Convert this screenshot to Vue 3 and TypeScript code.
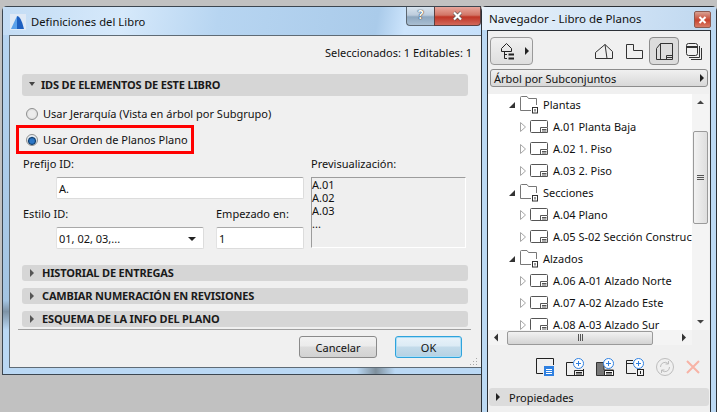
<script setup lang="ts">
interface Row { kind: 'folder' | 'sheet'; text: string }
const rows: Row[] = [
  { kind: 'folder', text: 'Plantas' },
  { kind: 'sheet', text: 'A.01 Planta Baja' },
  { kind: 'sheet', text: 'A.02 1. Piso' },
  { kind: 'sheet', text: 'A.03 2. Piso' },
  { kind: 'folder', text: 'Secciones' },
  { kind: 'sheet', text: 'A.04 Plano' },
  { kind: 'sheet', text: 'A.05 S-02 Sección Constructiva' },
  { kind: 'folder', text: 'Alzados' },
  { kind: 'sheet', text: 'A.06 A-01 Alzado Norte' },
  { kind: 'sheet', text: 'A.07 A-02 Alzado Este' },
  { kind: 'sheet', text: 'A.08 A-03 Alzado Sur' },
]
const collapsed = ['HISTORIAL DE ENTREGAS', 'CAMBIAR NUMERACIÓN EN REVISIONES', 'ESQUEMA DE LA INFO DEL PLANO']
</script>

<template>
  <div class="desktop">
    <section class="win dialog">
      <div class="dlg-title">
        <svg class="logo" width="16" height="16" viewBox="0 0 16 16">
          <rect width="16" height="16" fill="#dfe9f5" />
          <path d="M1 15 L7 2 L7 15Z" fill="#5aa0ea" />
          <path d="M7 15 L7 2 Q11 2 14 15Z" fill="#1d5fc0" />
        </svg>
        <span class="dlg-name">Definiciones del Libro</span>
        <div class="caption">
          <span class="cap-help">?</span>
          <span class="cap-close">
            <svg width="11" height="10" viewBox="0 0 11 10"><path d="M2 1.5 L9 8.5 M9 1.5 L2 8.5" stroke="#555" stroke-width="3.4" /><path d="M2 1.5 L9 8.5 M9 1.5 L2 8.5" stroke="#fff" stroke-width="2.2" /></svg>
          </span>
        </div>
      </div>
      <div class="dlg-client">
        <div class="selected">Seleccionados: 1 Editables: 1</div>
        <div class="sec-head"><i class="tri-down"></i>IDS DE ELEMENTOS DE ESTE LIBRO</div>
        <div class="radios">
          <label class="radio-row"><i class="radio"></i>Usar Jerarquía (Vista en árbol por Subgrupo)</label>
          <label class="radio-row marked"><i class="radio on"></i>Usar Orden de Planos Plano</label>
        </div>
        <div class="form">
          <div class="form-left">
            <div class="lbl">Prefijo ID:</div>
            <div class="field prefix">A.</div>
            <div class="two">
              <div>
                <div class="lbl">Estilo ID:</div>
                <div class="field style-sel">01, 02, 03,...<i class="sel-arrow"></i></div>
              </div>
              <div>
                <div class="lbl">Empezado en:</div>
                <div class="field start">1</div>
              </div>
            </div>
          </div>
          <div class="form-right">
            <div class="lbl">Previsualización:</div>
            <div class="preview">A.01<br />A.02<br />A.03<br />...</div>
          </div>
        </div>
        <div class="sec-list">
          <div v-for="c in collapsed" :key="c" class="sec-head small"><i class="tri-right"></i>{{ c }}</div>
        </div>
        <div class="dlg-foot">
          <button class="btn cancel">Cancelar</button>
          <button class="btn ok">OK</button>
        </div>
        <svg class="grip" width="9" height="9" viewBox="0 0 9 9"><g fill="#a8a8a8"><rect x="7" y="1" width="1" height="1" /><rect x="7" y="4" width="1" height="1" /><rect x="7" y="7" width="1" height="1" /><rect x="4" y="4" width="1" height="1" /><rect x="4" y="7" width="1" height="1" /><rect x="1" y="7" width="1" height="1" /></g></svg>
      </div>
      <div class="dlg-bottom"></div>
    </section>

    <section class="win nav">
      <div class="nav-title">
        <span>Navegador - Libro de Planos</span>
        <span class="nav-close"><svg width="9" height="8" viewBox="0 0 9 8"><path d="M1.5 1 L7.5 7 M7.5 1 L1.5 7" stroke="#fff" stroke-width="2" /></svg></span>
      </div>
      <div class="nav-client">
        <div class="nav-tools">
          <button class="tool-map">
            <svg width="14" height="17" viewBox="0 0 14 17" fill="none" stroke="#222"><path d="M.5 5.5 L5.5 .5 L10.5 5.5 V8.5 H.5 Z" /><path d="M3.5 8.5 V15.5 H6 M3.5 11.5 H6" /><path d="M7.5 11.5 H13 M7.5 15.5 H13" stroke-width="2" /></svg>
            <i class="tri-right black"></i>
          </button>
          <div class="tool-icons">
            <span class="ti">
              <svg width="18" height="15" viewBox="0 0 18 15" fill="none" stroke="#333"><path d="M.5 14.5 V8.5 L10 .5 L17.5 7.5 V14.5 Z M10 .5 L12 14.5" /></svg>
            </span>
            <span class="ti">
              <svg width="17" height="15" viewBox="0 0 17 15" fill="none" stroke="#333"><path d="M.5 .5 H7.5 V6.5 H16.5 V14.5 H.5 Z" /></svg>
            </span>
            <span class="ti sel">
              <svg width="17" height="17" viewBox="0 0 17 17" fill="none" stroke="#333"><path d="M4.5 .5 H16.5 V16.5 H.5 V5.5 Z M4.5 .5 V16.5" /><path d="M10.5 12.5 H16 M10.5 14.5 H16 M10.5 12.5 V16" /></svg>
            </span>
            <span class="ti">
              <svg width="16" height="17" viewBox="0 0 16 17" fill="none" stroke="#333"><rect x=".5" y=".5" width="11" height="12" rx="2" /><path d="M13.5 3 V14.5 H3 M15.5 5 V16.5 H5" /><path d="M.5 4 H11.5" stroke-width="2" /></svg>
            </span>
          </div>
        </div>
        <div class="nav-select">Árbol por Subconjuntos<i class="tri-right black"></i></div>
        <div class="tree-wrap">
          <div class="tree-top">
            <div class="tree">
              <div v-for="r in rows" :key="r.text" class="tree-row" :class="r.kind">
                <template v-if="r.kind === 'folder'">
                  <svg class="exp" width="7" height="6" viewBox="0 0 7 6"><path d="M0 6 H6 V0 Z" fill="#333" /></svg>
                  <svg class="ic" width="19" height="18" viewBox="0 0 19 18" fill="none" stroke="#777"><path d="M.5 14.5 V1.5 Q.5 .5 1.5 .5 H7 L8.5 2.5 H16.5 V9 M.5 14.5 H11" /><rect x="12.5" y="11.5" width="5" height="5.5" stroke="#333" /><path d="M15 13 V15.5" stroke="#333" /></svg>
                </template>
                <template v-else>
                  <svg class="exp" width="6" height="10" viewBox="0 0 6 10"><path d="M.5 .5 L5.5 5 L.5 9.5 Z" fill="#fff" stroke="#a6a6a6" /></svg>
                  <svg class="ic" width="18" height="13" viewBox="0 0 18 13" fill="none" stroke="#555"><path d="M17.5 7 V1.5 Q17.5 .5 16.5 .5 H1.5 Q.5 .5 .5 1.5 V11.5 Q.5 12.5 1.5 12.5 H17.5 V7.5 H10.5 V12.5" /><path d="M12 9.5 H16.5 M12 11 H16.5" /></svg>
                </template>
                <span class="tree-text">{{ r.text }}</span>
              </div>
            </div>
            <div class="vscroll">
              <svg width="17" height="16" viewBox="0 0 17 16"><path d="M5 10 L8.5 6.5 L12 10 Z" fill="#444" /></svg>
              <div class="vtrack"><div class="vthumb"><b></b><b></b><b></b></div></div>
              <svg width="17" height="16" viewBox="0 0 17 16"><path d="M5 6 L8.5 9.5 L12 6 Z" fill="#444" /></svg>
            </div>
          </div>
          <div class="hscroll">
            <svg width="17" height="15" viewBox="0 0 17 15"><path d="M10 3.5 L6 7.5 L10 11.5 Z" fill="#333" /></svg>
            <div class="hthumb"><b></b><b></b><b></b></div>
            <div class="htrack"></div>
            <svg width="17" height="15" viewBox="0 0 17 15"><path d="M7 3.5 L11 7.5 L7 11.5 Z" fill="#333" /></svg>
          </div>
        </div>
        <div class="nav-actions">
          <svg width="18" height="18" viewBox="0 0 18 18" fill="none"><path d="M17.5 7 V.5 H.5 V15.5 H7" stroke="#222" /><rect x="8" y="8" width="10" height="10" fill="#2f80e0" /><path d="M10 11.5 H16 M10 13.5 H16 M10 15.5 H16" stroke="#fff" /></svg>
          <svg width="18" height="18" viewBox="0 0 18 18" fill="none"><path d="M7 4.5 H.5 V17.5 H17.5 V11 M8.5 12.5 H17.5 V17.5 H8.5 Z M10 14.5 H16 M10 16 H16" stroke="#222" /><circle cx="12.5" cy="5.5" r="5" fill="#fff" stroke="#2f80e0" /><path d="M10 5.5 H15 M12.5 3 V8" stroke="#2f80e0" /></svg>
          <svg width="18" height="18" viewBox="0 0 18 18" fill="none"><path d="M.5 4.5 H8 V12 H17.5 V17.5 H.5 Z" fill="#777" stroke="#333" /><path d="M8.5 12.5 H17.5 V17.5 H8.5 Z M10 14.5 H16 M10 16 H16" fill="#fff" stroke="#222" /><circle cx="12.5" cy="5.5" r="5" fill="#fff" stroke="#2f80e0" /><path d="M10 5.5 H15 M12.5 3 V8" stroke="#2f80e0" /></svg>
          <svg width="18" height="18" viewBox="0 0 18 18" fill="none"><path d="M7 2.5 H.5 V15.5 H10 M.5 5.5 H7" stroke="#222" /><rect x="11.5" y="11.5" width="6" height="6" stroke="#222" /><path d="M14.5 13 V16" stroke="#222" /><circle cx="12.5" cy="5.5" r="5" fill="#fff" stroke="#2f80e0" /><path d="M10 5.5 H15 M12.5 3 V8" stroke="#2f80e0" /></svg>
          <svg width="18" height="18" viewBox="0 0 18 18" fill="none" stroke="#bdbdbd"><circle cx="9" cy="9" r="8.5" /><path d="M4.5 9 A4.5 4.5 0 0 1 12 5.5 M13.5 9 A4.5 4.5 0 0 1 6 12.5 M12.5 3 V6 H9.5 M5.5 15 V12 H8.5" /></svg>
          <svg width="14" height="14" viewBox="0 0 14 14" fill="none" stroke="#f7b3a6" stroke-width="2"><path d="M1 1 L13 13 M13 1 L1 13" /></svg>
        </div>
        <div class="props"><i class="tri-right black"></i>Propiedades</div>
      </div>
    </section>
  </div>
</template>

<style>
html, body { margin: 0; padding: 0; }
</style>

<style scoped>
.desktop {
  position: relative;
  width: 717px;
  height: 412px;
  overflow: hidden;
  background: #c1c1c1;
  font-family: "Noto Sans", "Liberation Sans", sans-serif;
  font-size: 11px;
  color: #111;
}
.win { position: absolute; box-sizing: border-box; display: flex; flex-direction: column; }
i { display: inline-block; font-style: normal; }

.dialog {
  left: 2px; top: 6px; width: 479px; height: 369px;
  border: 1px solid #3c4650;
  border-right: 0;
  border-radius: 5px 0 0 0;
  background: linear-gradient(#b8d6f2, #a3c4e2 80%, #7e93a6 83%, #bad8f4 88%);
}
.dlg-title { height: 28px; flex: none; display: flex; align-items: center; position: relative; padding-left: 7px; font-size: 11px; background: linear-gradient(100deg, #c3dcf4 0%, #d6e9fb 25%, #b7d5f1 45%, #aacbea 78%, #cce4fc 84%, #c6e0fa 100%); }
.logo { flex: none; margin-top: 2px; }
.dlg-name { margin-left: 5px; letter-spacing: 0.05px; font-size: 11.2px; margin-top: 1px; }
.caption { position: absolute; right: 0; top: 0; display: flex; height: 19px; }
.cap-help {
  width: 28px; box-sizing: border-box; text-align: center; font-weight: 700; font-size: 12px; line-height: 16px; color: #fff;
  text-shadow: 0 0 1px #222, 0 0 1px #222;
  background: linear-gradient(#d8e4ef 0%, #bdccdc 45%, #8ea7bf 55%, #a9bed2 100%);
  border: 1px solid #5c6670; border-top: 0; border-right: 0; border-radius: 0 0 0 4px;
}
.cap-close {
  width: 47px; box-sizing: border-box; display: flex; align-items: center; justify-content: center;
  background: linear-gradient(#e8a69c 0%, #d27566 45%, #bf3526 55%, #d2685a 100%);
  border: 1px solid #5c4040; border-top: 0; border-radius: 0 0 4px 0;
}
.dlg-client {
  position: relative;
  margin: 0 0 0 6px; height: 333px; flex: none; box-sizing: border-box;
  background: #f0f0f0; border: 1px solid #5f6b75; border-right: 0;
  padding: 0 0 0 12px;
}
.dlg-bottom { flex: 1; background: linear-gradient(90deg, #bad8f4 0 74%, #7e8f9c 78%, #bad8f4 82%); }
.selected { height: 38px; line-height: 34px; text-align: right; box-sizing: border-box; padding-right: 9px; }
.sec-head {
  height: 22px; width: 446px; box-sizing: border-box; background: #d6d6d6; border-radius: 3px;
  display: flex; align-items: center; font-weight: 700; padding: 0 0 2px 7px; color: #1a1a1a; letter-spacing: -0.17px;
}
.sec-head.small { height: 16px; padding-bottom: 1px; }
.tri-down { width: 0; height: 0; border-left: 3.5px solid transparent; border-right: 3.5px solid transparent; border-top: 4px solid #444; margin-right: 6px; }
.tri-right { width: 0; height: 0; border-top: 4px solid transparent; border-bottom: 4px solid transparent; border-left: 4px solid #555; margin-right: 8px; margin-left: 1px; }
.tri-right.black { border-left-color: #222; }
.radios { padding-top: 6px; display: flex; flex-direction: column; }
.radio-row { display: flex; align-items: center; height: 23px; padding-left: 4px; }
.radio-row.marked { outline: 3px solid #f00; outline-offset: -3px; margin-left: -6px; padding-left: 10px; width: 178px; height: 29px; box-sizing: border-box; }
.radio {
  width: 12px; height: 12px; box-sizing: border-box; border-radius: 50%; margin-right: 5px; border: 1px solid #8e8f8f;
  background: radial-gradient(circle at 50% 50%, #ececec 40%, #d4d4d4 100%); flex: none;
}
.radio.on { background: radial-gradient(circle at 50% 60%, #2b76c6 0 28%, #0f3f70 45%, #e8eef5 60%, #e8e8e8 100%); }
.form { display: flex; margin-left: 1px; }
.form-left { width: 288px; flex: none; }
.lbl { height: 23px; line-height: 20px; box-sizing: border-box; }
.field {
  height: 22px; box-sizing: border-box; background: #fff; border: 1px solid #dcdcdc; border-top: 1px solid #a9a9a9; border-left: 1px solid #e2e2e2; border-radius: 2px;
  display: flex; align-items: center; padding: 1px 0 0 2px;
}
.prefix { margin-left: 33px; width: 248px; }
.two { display: flex; margin-top: 5px; gap: 12px; }
.two > div:first-child { width: 181px; }
.two > div:last-child { width: 88px; }
.style-sel { margin-left: 33px; width: 148px; position: relative; }
.sel-arrow { position: absolute; right: 7px; top: 9px; width: 0; height: 0; border-left: 4px solid transparent; border-right: 4px solid transparent; border-top: 4px solid #222; }
.form-right { width: 155px; flex: none; }
.preview {
  height: 71px; box-sizing: border-box; border: 1px solid #ffffff; border-top: 1px solid #9c9c9c; border-left: 1px solid #9c9c9c;
  padding: 0; line-height: 13px; font-size: 11px; background: #efefef;
}
.sec-list { margin-top: 16px; display: flex; flex-direction: column; gap: 7px; }
.dlg-foot { position: relative; margin-top: 2px; margin-left: -4px; width: 453px; border-top: 1px solid #a0a0a0; padding-top: 6px; display: flex; justify-content: flex-end; gap: 18px; padding-right: 9px; box-sizing: border-box; }
.btn { height: 22px; font: inherit; color: #111; padding: 0; border-radius: 3px; }
.cancel { width: 78px; border: 1px solid #8a8a8a; background: linear-gradient(#f2f2f2 0%, #ebebeb 45%, #dcdcdc 50%, #d2d2d2 100%); }
.ok { width: 67px; border: 1px solid #2fa3dc; box-shadow: inset 0 0 0 1px #a9dcf5; background: linear-gradient(#e8f2f9 0%, #dcebf5 45%, #c3dbea 50%, #b5d1e3 100%); }
.grip { position: absolute; right: 3px; bottom: 1px; }

.nav {
  left: 481px; top: 6px; width: 236px; height: 406px;
  border: 1px solid #2b3036; border-bottom: 0; border-radius: 5px 5px 0 0;
  background: #bcd9f3;
}
.nav-title { height: 23px; flex: none; display: flex; align-items: center; padding-left: 7px; position: relative; font-size: 11.5px; background: linear-gradient(100deg, #eaf3fb, #cfe2f5 60%, #bed7ef); }
.nav-close { position: absolute; left: 212px; top: 4px; width: 17px; height: 17px; box-sizing: border-box; border: 1px solid #8d5a50; border-radius: 2px; display: flex; align-items: center; justify-content: center; background: linear-gradient(#d8a294, #c8442f 55%, #d87b66); }
.nav-client { flex: 1; margin: 0 5px; background: #f0f0f0; border: 1px solid #2b3036; border-bottom: 0; display: flex; flex-direction: column; }
.nav-tools { height: 38px; flex: none; display: flex; align-items: flex-start; padding: 6px 0 0 2px; box-sizing: border-box; justify-content: space-between; }
.tool-map { width: 43px; height: 28px; padding: 0 0 0 10px; display: flex; align-items: center; gap: 10px; background: linear-gradient(#f0f0f0, #dedede); border: 1px solid #9a9a9a; border-radius: 4px; box-sizing: border-box; }
.tool-map .tri-right { margin: 0; }
.tool-icons { display: flex; align-items: center; padding-right: 1px; }
.ti { width: 30px; height: 28px; display: flex; align-items: center; justify-content: center; box-sizing: border-box; }
.ti.sel { background: #dcdcdc; border: 1px solid #8c8c8c; border-radius: 4px; }
.nav-select { margin: 0 2px; width: 218px; height: 18px; box-sizing: border-box; border: 1px solid #8c8c8c; border-radius: 3px; display: flex; align-items: center; justify-content: space-between; padding: 0 0 0 3px; background: linear-gradient(#f0f0f0, #d8d8d8); flex: none; }
.nav-select .tri-right { margin: 0 3px 0 0; }
.tree-wrap { margin-top: 7px; flex: none; }
.tree-top { display: flex; height: 236px; }
.tree { width: 204px; height: 236px; overflow: hidden; background: #fff; flex: none; }
.tree-row { height: 22px; display: flex; align-items: center; position: relative; white-space: nowrap; padding-bottom: 1px; box-sizing: border-box; }
.folder { padding-left: 21px; }
.sheet { padding-left: 32px; }
.exp { flex: none; }
.folder .ic { margin: 0 4px; flex: none; }
.sheet .ic { margin: 0 5px 0 4px; flex: none; }
.vscroll { width: 17px; flex: none; background: #f4f4f4; display: flex; flex-direction: column; }
.vscroll > svg { flex: none; }
.vtrack { flex: 1; padding-top: 21px; }
.vthumb { width: 15px; height: 93px; margin-left: 1px; box-sizing: border-box; border: 1px solid #9a9a9a; border-radius: 2px; background: linear-gradient(90deg, #f2f2f2, #dedede); display: flex; flex-direction: column; align-items: center; justify-content: center; gap: 1px; }
.vthumb b { width: 7px; height: 1px; background: #555; }
.hscroll { height: 15px; width: 204px; display: flex; background: #f4f4f4; align-items: center; }
.hscroll > svg { flex: none; }
.hthumb { width: 146px; height: 14px; margin-left: 2px; box-sizing: border-box; border: 1px solid #9a9a9a; border-radius: 2px; background: linear-gradient(#f2f2f2, #d4d4d4); display: flex; align-items: center; justify-content: center; gap: 1px; flex: none; }
.hthumb b { width: 1px; height: 7px; background: #555; }
.htrack { flex: 1; }
.nav-actions { height: 43px; flex: none; display: flex; align-items: center; padding-left: 48px; gap: 12px; }
.props { margin: 0 1px; width: 220px; height: 18px; flex: none; box-sizing: border-box; border-radius: 3px; background: #dcdcdc; display: flex; align-items: center; padding-left: 7px; }
.props .tri-right { margin-right: 9px; margin-left: 0; }
</style>
